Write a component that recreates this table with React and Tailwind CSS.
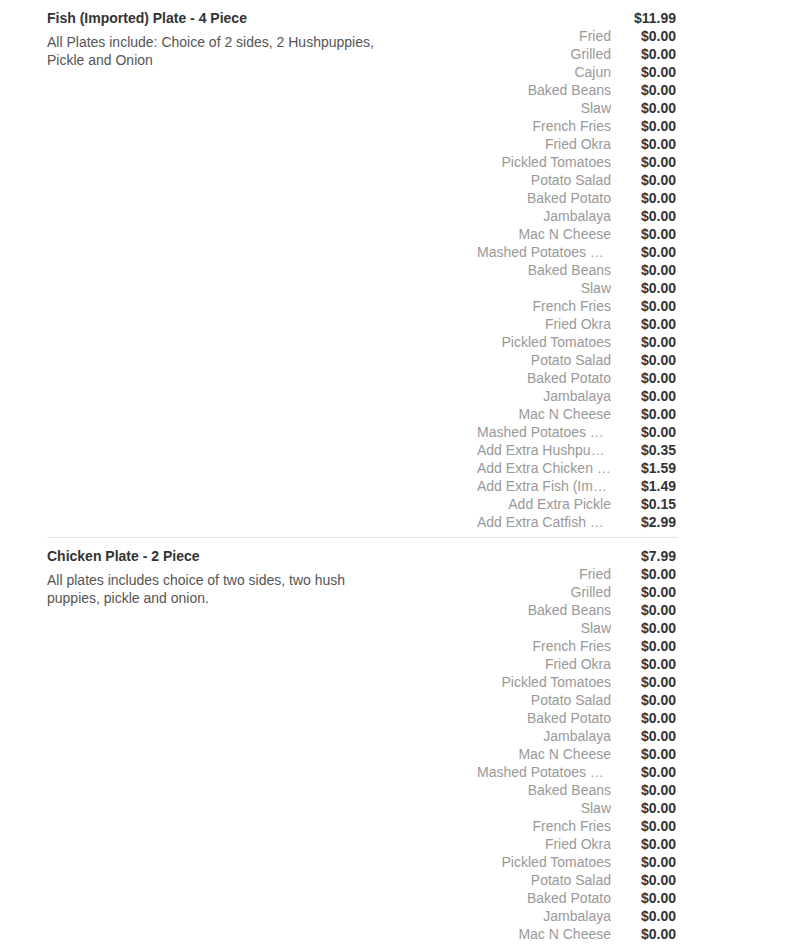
const sections = [
  {
    title: "Fish (Imported) Plate - 4 Piece",
    desc: "All Plates include: Choice of 2 sides, 2 Hushpuppies, Pickle and Onion",
    price: "$11.99",
    options: [
      ["Fried", "$0.00"], ["Grilled", "$0.00"], ["Cajun", "$0.00"], ["Baked Beans", "$0.00"],
      ["Slaw", "$0.00"], ["French Fries", "$0.00"], ["Fried Okra", "$0.00"], ["Pickled Tomatoes", "$0.00"],
      ["Potato Salad", "$0.00"], ["Baked Potato", "$0.00"], ["Jambalaya", "$0.00"], ["Mac N Cheese", "$0.00"],
      ["Mashed Potatoes and Gravy", "$0.00"], ["Baked Beans", "$0.00"], ["Slaw", "$0.00"], ["French Fries", "$0.00"],
      ["Fried Okra", "$0.00"], ["Pickled Tomatoes", "$0.00"], ["Potato Salad", "$0.00"], ["Baked Potato", "$0.00"],
      ["Jambalaya", "$0.00"], ["Mac N Cheese", "$0.00"], ["Mashed Potatoes and Gravy", "$0.00"],
      ["Add Extra Hushpuppies", "$0.35"], ["Add Extra Chicken Piece", "$1.59"], ["Add Extra Fish (Imported)", "$1.49"],
      ["Add Extra Pickle", "$0.15"], ["Add Extra Catfish Piece", "$2.99"],
    ],
  },
  {
    title: "Chicken Plate - 2 Piece",
    desc: "All plates includes choice of two sides, two hush puppies, pickle and onion.",
    price: "$7.99",
    options: [
      ["Fried", "$0.00"], ["Grilled", "$0.00"], ["Baked Beans", "$0.00"], ["Slaw", "$0.00"],
      ["French Fries", "$0.00"], ["Fried Okra", "$0.00"], ["Pickled Tomatoes", "$0.00"], ["Potato Salad", "$0.00"],
      ["Baked Potato", "$0.00"], ["Jambalaya", "$0.00"], ["Mac N Cheese", "$0.00"], ["Mashed Potatoes and Gravy", "$0.00"],
      ["Baked Beans", "$0.00"], ["Slaw", "$0.00"], ["French Fries", "$0.00"], ["Fried Okra", "$0.00"],
      ["Pickled Tomatoes", "$0.00"], ["Potato Salad", "$0.00"], ["Baked Potato", "$0.00"], ["Jambalaya", "$0.00"],
      ["Mac N Cheese", "$0.00"],
    ],
  },
];

function Section({ s, last }) {
  return (
    <div className={`flex justify-between pt-[9px] pb-[6px] ${last ? "" : "border-b border-[#e5e5e5]"}`}>
      <div className="w-[330px]">
        <div className="text-[14px] leading-[18px] font-bold text-[#333]">{s.title}</div>
        <div className="mt-[6px] text-[14px] leading-[18px] text-[#555]">{s.desc}</div>
      </div>
      <div className="flex flex-col pr-[2px]">
        <div className="flex gap-[15px] h-[18px] items-center">
          <div className="w-[134px]"></div>
          <div className="w-[50px] text-right text-[14px] font-bold text-[#333] leading-[18px]">{s.price}</div>
        </div>
        {s.options.map(([n, p], i) => (
          <div key={i} className="flex gap-[15px] h-[18px] items-center">
            <div className="w-[134px] text-right text-[14px] leading-[18px] text-[#999] truncate">{n}</div>
            <div className="w-[50px] text-right text-[14px] font-bold text-[#333] leading-[18px]">{p}</div>
          </div>
        ))}
      </div>
    </div>
  );
}

export default function App() {
  return (
    <div className="bg-white min-h-[946px] pl-[47px]" style={{ fontFamily: '"Liberation Sans", Arial, sans-serif' }}>
      <div className="w-[631px] flex flex-col">
        <Section s={sections[0]} />
        <Section s={sections[1]} last />
      </div>
    </div>
  );
}
